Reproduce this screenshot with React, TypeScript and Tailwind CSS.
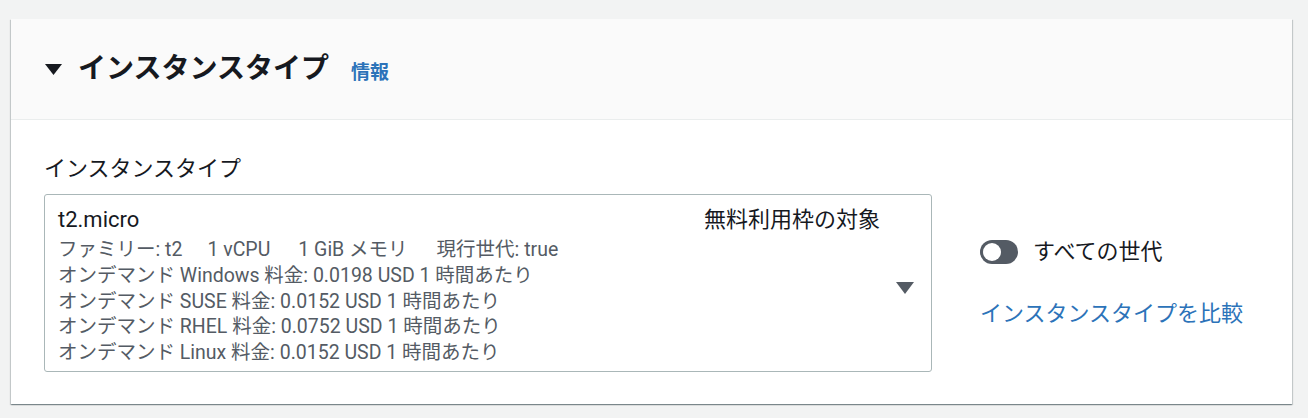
import React from "react";

const font = { fontFamily: 'Roboto, "Noto Sans CJK JP", sans-serif' };

export default function App() {
  return (
    <div className="min-h-[418px] w-[1308px] bg-[#f2f3f3] pt-[19px] pl-[11px] pr-[16px] pb-[12px]" style={font}>
      <div className="bg-white shadow-[0_1px_1px_0_rgba(0,28,36,0.3),1px_1px_1px_0_rgba(0,28,36,0.15),-1px_1px_1px_0_rgba(0,28,36,0.15)]">
        <div className="h-[101px] bg-[#fafafa] border-b border-[#eaeded] flex items-center pl-[34px]">
          <svg width="17" height="11" viewBox="0 0 17 11" className="mt-[1px]">
            <polygon points="0,0 17,0 8.5,11" fill="#16191f" />
          </svg>
          <span className="ml-[16px] text-[28px] leading-[36px] font-bold text-[#16191f]">インスタンスタイプ</span>
          <span className="ml-[22px] mt-[8px] text-[19px] font-bold text-[#2c73b9]">情報</span>
        </div>
        <div className="px-[33px] pt-[35px] pb-[32px]">
          <div className="text-[22px] leading-[28px] text-[#16191f] mb-[11px]">インスタンスタイプ</div>
          <div className="flex gap-[48px]">
            <div className="w-[888px] h-[178px] border border-[#aab7b8] rounded-[3px] flex pl-[13px] pt-[11px] pr-[17px]">
              <div className="flex-1">
                <div className="text-[22px] leading-[28px] text-[#16191f]">t2.micro</div>
                <div className="mt-[3px] text-[19.5px] leading-[25.75px] text-[#545b64]">
                  <div className="flex">
                    <span className="mr-[25px]">ファミリー: t2</span>
                    <span className="mr-[28px]">1 vCPU</span>
                    <span className="mr-[29px]">1 GiB メモリ</span>
                    <span>現行世代: true</span>
                  </div>
                  <div>オンデマンド Windows 料金: 0.0198 USD 1 時間あたり</div>
                  <div>オンデマンド SUSE 料金: 0.0152 USD 1 時間あたり</div>
                  <div>オンデマンド RHEL 料金: 0.0752 USD 1 時間あたり</div>
                  <div>オンデマンド Linux 料金: 0.0152 USD 1 時間あたり</div>
                </div>
              </div>
              <div className="text-[22px] leading-[28px] text-[#16191f]">無料利用枠の対象</div>
              <div className="ml-[16px] self-center mb-[2px]">
                <svg width="18" height="12" viewBox="0 0 18 12">
                  <polygon points="0,0 18,0 9,12" fill="#545b64" />
                </svg>
              </div>
            </div>
            <div className="pt-[44px]">
              <div className="flex items-center">
                <div className="relative w-[38px] h-[24px] rounded-full bg-[#545b64]">
                  <div className="absolute left-[3px] top-[3px] w-[18px] h-[18px] rounded-full bg-white"></div>
                </div>
                <span className="ml-[15px] text-[22px] leading-[28px] text-[#16191f]">すべての世代</span>
              </div>
              <div className="mt-[34px] text-[22px] leading-[28px] text-[#2c73b9]">インスタンスタイプを比較</div>
            </div>
          </div>
        </div>
      </div>
    </div>
  );
}
